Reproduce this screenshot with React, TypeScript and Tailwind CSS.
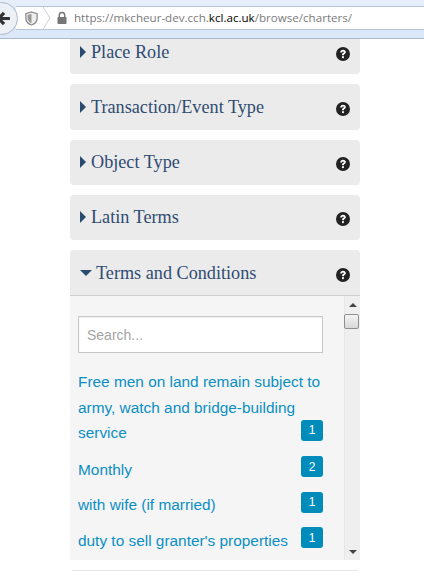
// App.tsx
const serif = "font-['Liberation_Serif',serif]";

const HelpIcon = () => (
  <svg className="h-[14px] w-[14px]" viewBox="0 0 14 14">
    <circle cx="7" cy="7" r="7" fill="#222" />
    <path d="M4.2 5.400C4.300 3.700 5.500 2.800 7 2.800c1.700 0 2.800.9 2.800 2.300 0 1.100-.6 1.600-1.300 2-.5.3-.6.5-.6 1.100H6c0-1.100.2-1.600 1-2.100.5-.3.800-.5.800-.9 0-.4-.3-.7-.8-.7-.6 0-.9.3-1 .9z" fill="#fff" />
    <rect x="6" y="9.200" width="1.900" height="1.900" fill="#fff" />
  </svg>
);

const Panel = ({ title, className }: { title: string; className: string }) => (
  <div className={`mx-[70px] flex w-[290px] items-start justify-between rounded-b bg-[#ebebeb] pl-[10px] pr-[10px] ${className}`}>
    <div className={`${serif} flex items-center gap-[5px] text-[18.200px] leading-[20px] text-[#2f4c72]`}>
      <span className="h-0 w-0 border-y-[6px] border-l-[6px] border-y-transparent border-l-[#2b4a70]" />
      {title}
    </div>
  </div>
);

const items = [
  { label: 'Monthly', count: 2, gap: 'mt-[11px]' },
  { label: 'with wife (if married)', count: 1, gap: 'mt-[10px]' },
  { label: "duty to sell granter's properties", count: 1, gap: 'mt-[10px]' },
];

const Badge = ({ n }: { n: number }) => (
  <span className="-mt-[0.600px] flex h-[21px] w-[22px] shrink-0 items-center justify-center rounded-[3px] bg-[#008cba] text-[12px] leading-none text-white">
    {n}
  </span>
);

export default function App() {
  return (
    <div className="h-[571px] w-[424px] overflow-hidden bg-white font-['Liberation_Sans',sans-serif]">
      {/* Browser toolbar */}
      <div className="relative flex h-[39px] items-start border-b border-[#a9b9cf] bg-[#dce8f7] pt-[6px]">
        <div className="absolute inset-x-0 top-0 h-[6px] bg-[#e6eef9]" />
        <div className="relative ml-[16px] flex h-[24px] flex-1 items-center border-y border-[#b5c3d6] bg-white pl-[9px]">
          <svg className="h-[17px] w-[13px]" viewBox="0 0 15 17">
            <path d="M7.500 1 14 3v5c0 4-3 7-6.500 8C4 15 1 12 1 8V3z" fill="#eee" stroke="#8b8b8b" strokeWidth="1.500" />
            <path d="M7.500 3v11C5 13 3 11 3 8V4.500z" fill="#9a9a9a" />
          </svg>
          <svg className="ml-[5px] h-[24px] w-[8px]" viewBox="0 0 8 25">
            <path d="M0 1l7 11.500L0 24" fill="none" stroke="#c8d0da" />
          </svg>
          <svg className="ml-[6px] h-[14px] w-[10px]" viewBox="0 0 11 14">
            <path d="M2.500 6V4a3 3 0 0 1 6 0v2" fill="none" stroke="#777" strokeWidth="1.600" />
            <rect x="0.500" y="6" width="10" height="7.500" rx="1" fill="#777" />
          </svg>
          <span className="ml-[7px] font-['Open_Sans',sans-serif] text-[11.600px] text-[#7b7b7b]">
            https://mkcheur-dev.cch.<span className="text-black">kcl.ac.uk</span>/browse/charters/
          </span>
        </div>
        {/* Back button sits over the left end of the address bar */}
        <div className="absolute left-[-15px] top-[2px] flex h-[33px] w-[33px] items-center justify-end rounded-full border border-[#a9b9cf] bg-[#edf1f6] pr-[6px]">
          <svg className="h-[15px] w-[15px]" viewBox="0 0 14 14">
            <path d="M13 7H3M7.500 1.800 2.500 7l5 5.200" fill="none" stroke="#333" strokeWidth="3" />
          </svg>
        </div>
      </div>

      <div className="relative">
        <Panel title="Place Role" className="h-[35px] pt-[3px]" />
        <span className="absolute left-[336px] top-[8px]"><HelpIcon /></span>
      </div>

      <div className="relative mt-[10px]">
        <Panel title="Transaction/Event Type" className="h-[46px] rounded pt-[13px]" />
        <span className="absolute left-[336px] top-[18px]"><HelpIcon /></span>
      </div>
      <div className="relative mt-[10px]">
        <Panel title="Object Type" className="h-[45px] rounded pt-[12px]" />
        <span className="absolute left-[336px] top-[17px]"><HelpIcon /></span>
      </div>
      <div className="relative mt-[10px]">
        <Panel title="Latin Terms" className="h-[45px] rounded pt-[12px]" />
        <span className="absolute left-[336px] top-[17px]"><HelpIcon /></span>
      </div>

      {/* Open panel */}
      <div className="relative mx-[70px] mt-[10px] w-[290px]">
        <div className="flex h-[46px] items-start rounded-t border-b border-[#cfcfcf] bg-[#ebebeb] pl-[10px] pt-[13px]">
          <div className={`${serif} flex items-center gap-[4px] text-[18.200px] leading-[20px] text-[#2f4c72]`}>
            <span className="h-0 w-0 border-x-[6px] border-t-[6px] border-x-transparent border-t-[#2b4a70]" />
            Terms and Conditions
          </div>
        </div>
        <span className="absolute left-[266px] top-[18px]"><HelpIcon /></span>

        <div className="flex h-[264px] overflow-hidden bg-[#f5f5f5]">
          <div className="w-[274px] pl-[8px] pr-[21px] pt-[20px]">
            <input
              readOnly
              placeholder="Search..."
              className="h-[37px] w-[245px] border border-[#c8c8c8] bg-white px-[8px] text-[14px] shadow-[inset_0_1px_2px_rgba(0,0,0,0.08)] outline-none placeholder:text-[#a5a5a5]"
            />
            <div className="mt-[16px] flex w-[245px] flex-col text-[15.400px] leading-[25.600px] text-[#0a8fc4]">
              <div>Free men on land remain subject to army, watch and bridge-building</div>
              <div className="flex items-start justify-between">
                service
                <Badge n={1} />
              </div>
              {items.map((item) => (
                <div key={item.label} className={`${item.gap} flex items-start justify-between whitespace-nowrap`}>
                  {item.label}
                  <Badge n={item.count} />
                </div>
              ))}
            </div>
          </div>

          {/* Scrollbar */}
          <div className="flex w-[16px] flex-col items-center border-l border-[#e6e6e6] bg-[#efefef]">
            <span className="mt-[7px] h-0 w-0 border-x-[4px] border-b-[4px] border-x-transparent border-b-[#444]" />
            <span className="-ml-px mt-[7px] h-[15px] w-[15px] self-start rounded-[2px] border border-[#8f8f8f] bg-linear-to-b from-[#f4f4f4] to-[#d8d8d8]" />
            <span className="mt-auto mb-[6px] h-0 w-0 border-x-[4px] border-t-[4px] border-x-transparent border-t-[#444]" />
          </div>
        </div>
        <div className="mx-[2px] mt-[10px] h-px bg-[#e6e6e6]" />
      </div>
    </div>
  );
}
